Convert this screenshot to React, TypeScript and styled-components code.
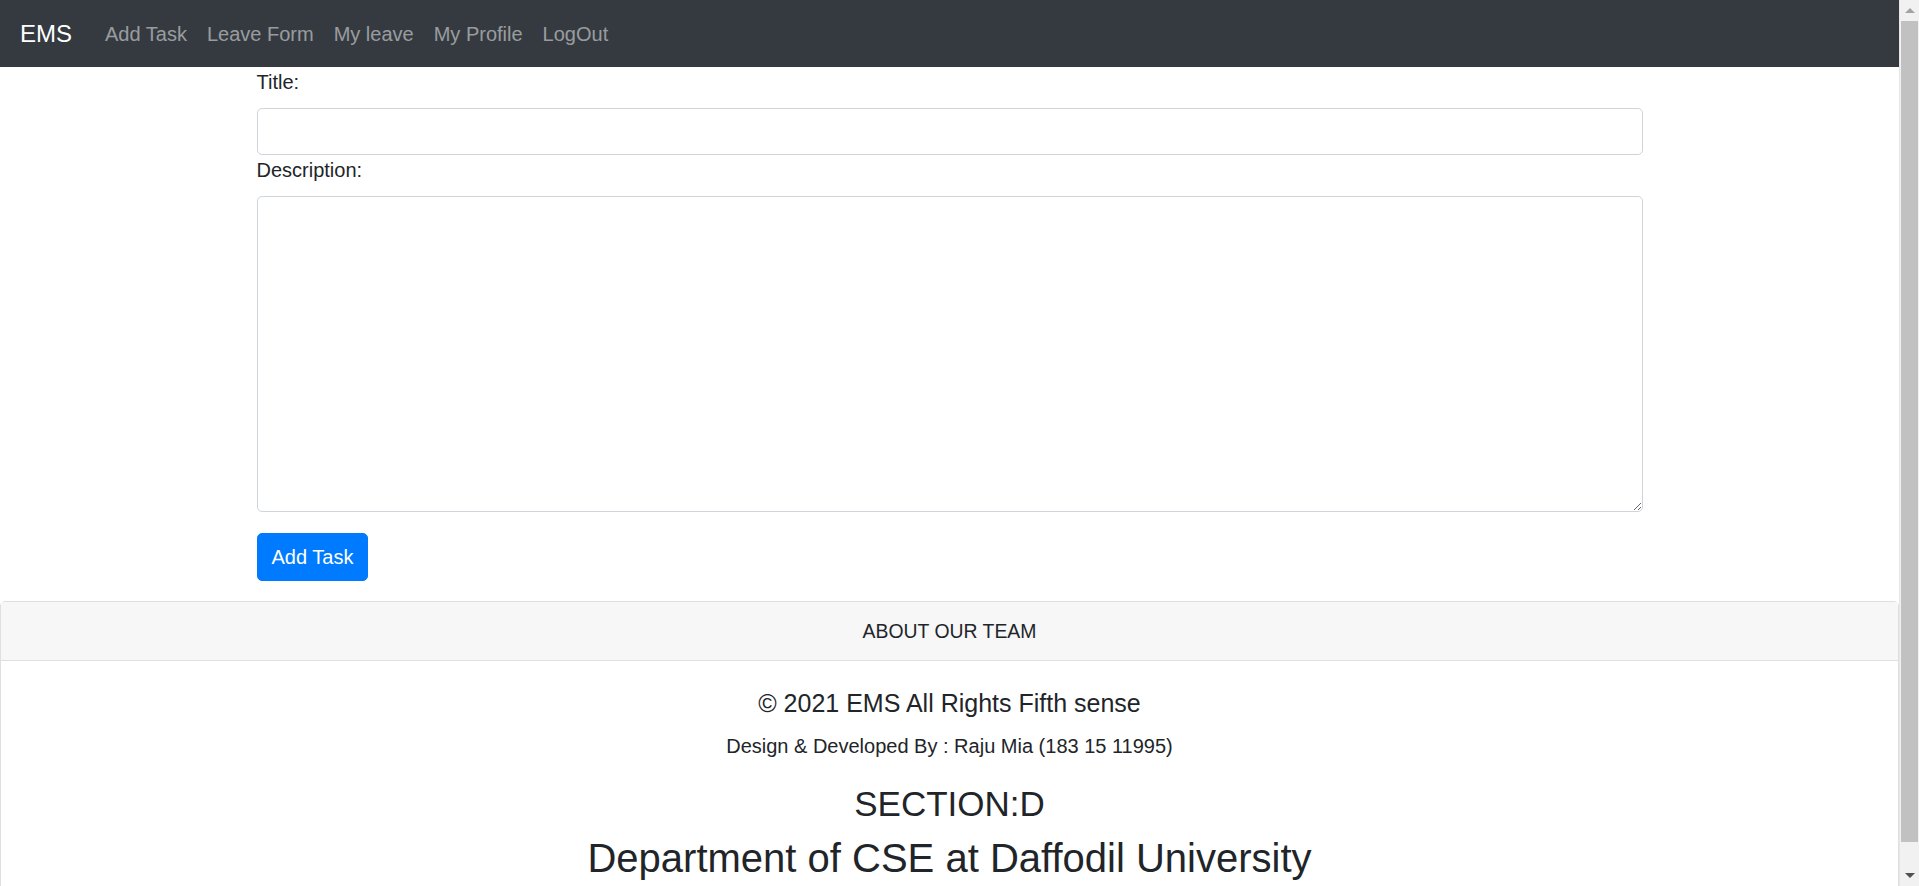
import React from 'react';
import styled, { createGlobalStyle } from 'styled-components';

// **** Global **** //

const GlobalStyle = createGlobalStyle`
  html, body {
    margin: 0;
    padding: 0;
    background: #fff;
    color: #212529;
    font-family: "Liberation Sans", Arial, sans-serif;
    overflow: hidden;
  }
  * {
    box-sizing: border-box;
  }
`;

// **** Window frame: page + classic scrollbar **** //

const Shell = styled.div`
  display: flex;
  height: 100vh;
`;

const Page = styled.div`
  flex: 1;
  min-width: 0;
  overflow: hidden;
`;

const ScrollTrack = styled.aside`
  display: flex;
  flex-direction: column;
  width: 20px;
  background: #f1f1f1;
  border-left: 1px solid #e6e6e6;
`;

type ArrowProps = {
  dir: 'up' | 'down';
};

const ScrollArrow = styled.div<ArrowProps>`
  display: flex;
  align-items: center;
  justify-content: center;
  height: 21px;

  &::after {
    content: '';
    width: 0;
    height: 0;
    border-left: 5px solid transparent;
    border-right: 5px solid transparent;
    ${p =>
      p.dir === 'up'
        ? 'border-bottom: 5px solid #a3a3a3;'
        : 'border-top: 5px solid #505050;'}
  }
`;

const ScrollThumb = styled.div`
  flex: 1;
  margin: 0 1px 23px 1px;
  background: #c1c1c1;
`;

// **** Navbar **** //

const Navbar = styled.nav`
  display: flex;
  align-items: center;
  height: 67px;
  padding: 0 20px;
  background: #343a40;
`;

const Brand = styled.a`
  color: #fff;
  font-size: 24px;
  line-height: 30px;
  margin-right: 23px;
  text-decoration: none;
`;

const NavList = styled.ul`
  display: flex;
  list-style: none;
  margin: 0;
  padding: 0;
`;

const NavLink = styled.a`
  display: block;
  padding: 0 10px;
  color: rgba(255, 255, 255, 0.5);
  font-size: 20px;
  line-height: 30px;
  text-decoration: none;
`;

// **** Form **** //

const Container = styled.div`
  width: 1386px;
  margin: 0 auto;
  padding-bottom: 20px;
`;

const Label = styled.label`
  display: block;
  font-size: 20px;
  line-height: 30px;
  margin-bottom: 11px;
`;

const Input = styled.input`
  display: block;
  width: 100%;
  height: 47px;
  border: 1px solid #ced4da;
  border-radius: 5px;
  font-family: inherit;
  font-size: 20px;
  padding: 0 15px;
  outline: none;
`;

const TextArea = styled.textarea`
  display: block;
  width: 100%;
  height: 316px;
  border: 1px solid #ced4da;
  border-radius: 5px;
  font-family: inherit;
  font-size: 20px;
  padding: 8px 15px;
  outline: none;
`;

const SubmitButton = styled.button`
  margin-top: 21px;
  height: 48px;
  padding: 0 14px;
  border: 1px solid #007bff;
  border-radius: 5px;
  background: #007bff;
  color: #fff;
  font-family: inherit;
  font-size: 20px;
  line-height: 30px;
  cursor: pointer;
`;

// **** Footer card **** //

const Card = styled.footer`
  border: 1px solid #dfdfdf;
  border-radius: 5px;
  text-align: center;
`;

const CardHeader = styled.div`
  padding: 14px 20px;
  background: #f7f7f7;
  border-bottom: 1px solid #dfdfdf;
  font-size: 19.4px;
  line-height: 30px;
`;

const CardBody = styled.div`
  padding: 27px 20px 20px;
`;

type HeadingProps = {
  size: number;
  gap: number;
};

const Heading = styled.div<HeadingProps>`
  font-size: ${p => p.size}px;
  line-height: 1.2;
  font-weight: 400;
  margin: 0 0 ${p => p.gap}px;
`;

const Credit = styled.p`
  font-size: 20px;
  line-height: 30px;
  margin: 0 0 22px;
`;

// **** Component Function **** //

const links = ['Add Task', 'Leave Form', 'My leave', 'My Profile', 'LogOut'];

const App = () => {
  return (
    <>
      <GlobalStyle />
      <Shell>
        <Page>
          <Navbar>
            <Brand href="#">EMS</Brand>
            <NavList>
              {links.map(label => (
                <li key={label}>
                  <NavLink href="#">{label}</NavLink>
                </li>
              ))}
            </NavList>
          </Navbar>

          <Container>
            <form onSubmit={e => e.preventDefault()}>
              <Label htmlFor="title">Title:</Label>
              <Input id="title" type="text" />
              <Label htmlFor="description">Description:</Label>
              <TextArea id="description" />
              <SubmitButton type="submit">Add Task</SubmitButton>
            </form>
          </Container>

          <Card>
            <CardHeader>ABOUT OUR TEAM</CardHeader>
            <CardBody>
              <Heading size={25} gap={13}>
                © 2021 EMS All Rights Fifth sense
              </Heading>
              <Credit>Design &amp; Developed By : Raju Mia (183 15 11995)</Credit>
              <Heading size={35} gap={9}>
                SECTION:D
              </Heading>
              <Heading size={40} gap={0}>
                Department of CSE at Daffodil University
              </Heading>
            </CardBody>
          </Card>
        </Page>
        <ScrollTrack>
          <ScrollArrow dir="up" />
          <ScrollThumb />
          <ScrollArrow dir="down" />
        </ScrollTrack>
      </Shell>
    </>
  );
};

export default App;
